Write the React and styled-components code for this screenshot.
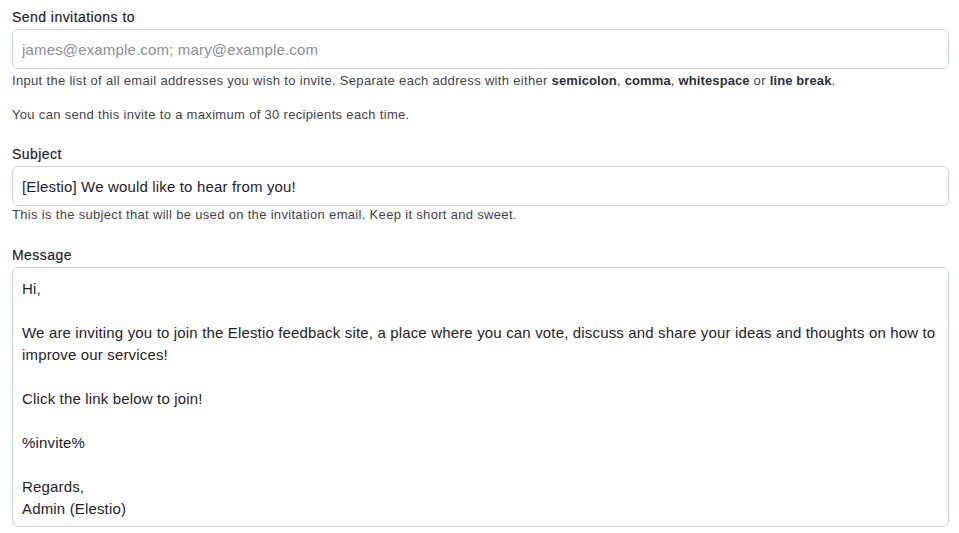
import React from "react";
import styled, { createGlobalStyle } from "styled-components";

const Global = createGlobalStyle`
  html, body { margin: 0; padding: 0; background: #ffffff; }
  body { font-family: "Liberation Sans", Arial, sans-serif; color: #1f2328; }
  * { box-sizing: border-box; }
`;

const Form = styled.form`
  display: flex;
  flex-direction: column;
  padding: 7px 10px 0 12px;
`;

const Field = styled.div`
  display: flex;
  flex-direction: column;
  margin-top: ${(p) => p.$top || 0}px;
`;

const Label = styled.label`
  font-size: 14px;
  line-height: 20px;
  font-weight: 500;
  letter-spacing: 0.45px;
  color: #1f2328;
  -webkit-text-stroke: 0.2px #1f2328;
  margin-bottom: 2px;
`;

const TextInput = styled.input`
  height: 40px;
  width: 100%;
  border: 1px solid #d0d3d8;
  border-radius: 6px;
  padding: 0 9px;
  font-family: inherit;
  font-size: 15px;
  letter-spacing: 0.16px;
  color: #1f2328;
  background: #fff;
  outline: none;
  &::placeholder { color: #8b8f96; }
`;

const TextArea = styled.textarea`
  height: 260px;
  width: 100%;
  border: 1px solid #d0d3d8;
  border-radius: 6px;
  padding: 10px 9px;
  font-family: inherit;
  font-size: 15px;
  letter-spacing: 0.16px;
  line-height: 22px;
  color: #1f2328;
  background: #fff;
  outline: none;
  resize: none;
  overflow: hidden;
  white-space: pre;
`;

const Help = styled.p`
  margin: ${(p) => p.$top || 0}px 0 0;
  font-size: 13px;
  line-height: 18px;
  letter-spacing: 0.32px;
  color: #3f444b;
  b { font-weight: 700; color: #2b3038; letter-spacing: 0.1px; }
`;

const message = `Hi,

We are inviting you to join the Elestio feedback site, a place where you can vote, discuss and share your ideas and thoughts on how to
improve our services!

Click the link below to join!

%invite%

Regards,
Admin (Elestio)`;

export default function App() {
  return (
    <>
      <Global />
      <Form onSubmit={(e) => e.preventDefault()}>
        <Field>
          <Label htmlFor="to">Send invitations to</Label>
          <TextInput id="to" placeholder="james@example.com; mary@example.com" />
          <Help $top={3}>
            Input the list of all email addresses you wish to invite. Separate each address with either{" "}
            <b>semicolon</b>, <b>comma</b>, <b>whitespace</b> or <b>line break</b>.
          </Help>
          <Help $top={16}>You can send this invite to a maximum of 30 recipients each time.</Help>
        </Field>
        <Field $top={20}>
          <Label htmlFor="subject">Subject</Label>
          <TextInput id="subject" defaultValue="[Elestio] We would like to hear from you!" />
          <Help $top={0}>This is the subject that will be used on the invitation email. Keep it short and sweet.</Help>
        </Field>
        <Field $top={21}>
          <Label htmlFor="message">Message</Label>
          <TextArea id="message" wrap="off" defaultValue={message} />
        </Field>
      </Form>
    </>
  );
}
